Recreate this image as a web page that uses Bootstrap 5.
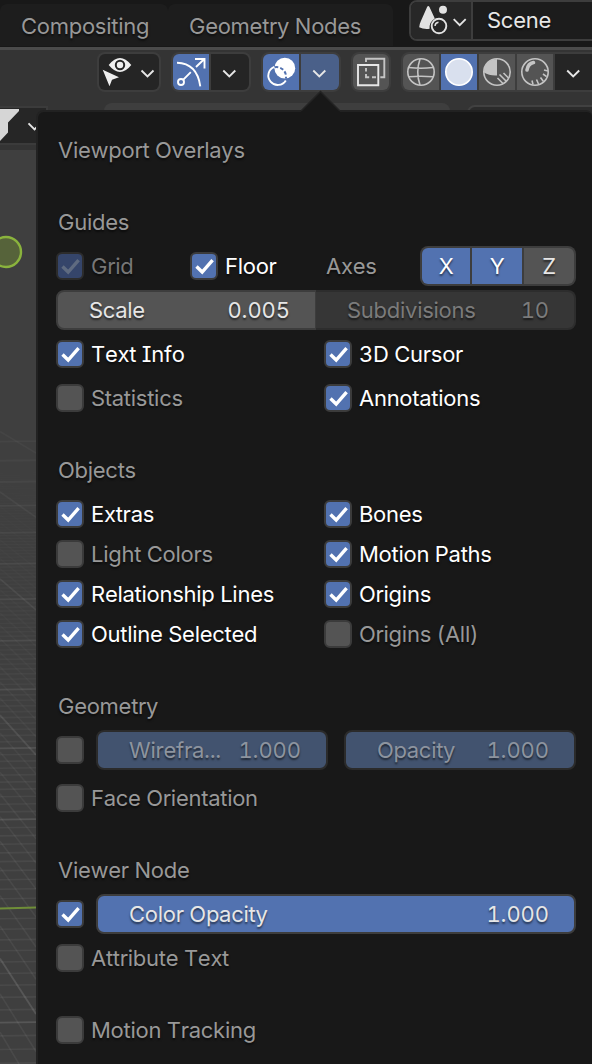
<!DOCTYPE html>
<html lang="en" data-bs-theme="dark">
<head>
<meta charset="utf-8">
<title>Viewport Overlays</title>
<meta name="viewport" content="width=device-width, initial-scale=1">
<link href="https://cdn.jsdelivr.net/npm/bootstrap@5.3.0/dist/css/bootstrap.min.css" rel="stylesheet">
<style>
:root{--blue:#5272b0;--edge:#3d3d3d;--muted:#989898}
body{margin:0;width:592px;height:1064px;overflow:hidden;background:#3f3f3f;color:var(--muted);
  font:400 22px/40px Inter,"Noto Sans",sans-serif;font-kerning:none;font-feature-settings:"tnum","cv08";letter-spacing:-.27px;text-shadow:0 2px 2px rgba(0,0,0,.55)}
svg{display:block;flex:none}
.topbar{height:47px;background:#181818}
.topbar>*,.head3d>*,.settings>*{flex-shrink:0}
.ws-tab{height:42px;margin-top:4px;background:#1d1d1d;border-radius:7px 7px 0 0;line-height:45px;white-space:nowrap}
.scene-box{height:41px;width:200px;border:2px solid var(--edge);border-radius:8px;background:#1c1c1c;overflow:hidden;line-height:37px;color:#e6e6e6}
.scene-pick{width:62px;border-right:2px solid var(--edge);background:#272727}
.head3d{height:56px;border-top:3px solid #4b4b4b;background:#343434;padding:2px 0 0 97px}
.tool-group{height:40px;padding:2px;gap:2px;background:var(--edge);border-radius:8px;overflow:hidden}
.tool-group>*{height:36px;background:#545454}
.tool-group>:first-child{border-radius:6px 0 0 6px}
.tool-group>:last-child{border-radius:0 6px 6px 0}
.tool-group>:only-child{border-radius:6px}
.tool-group>.dk{background:#252525}
.tool-group>.on{background:var(--blue)}
.tool-group>.open{background:#4a6089}
.settings{height:47px;background:#343434}
.filter-box{width:48px;height:39px;margin-top:3px;background:#262626;border:solid #3b3b3b;border-width:2px 2px 2px 0}
.tool-strip{width:346px;height:40px;background:#3e3e3e;border-radius:8px}
.tool-strip2{width:140px;height:40px;border:2px solid #414141;border-radius:8px;background:#2b2b2b}
.overlays{left:36px;top:110px;width:556px;height:970px;background:#181818;border:2px solid #222;border-right-width:0;border-radius:8px 6px 0 0;padding:18px 16px 0 18px}
.arrow{left:300px;top:90px}
.line-row{height:40px;display:flex;align-items:center}
.sep{height:32px}
.halves{display:grid;grid-template-columns:252px 252px;column-gap:16px}
.opt{display:flex;align-items:center;height:40px;margin:0;white-space:nowrap}
.opt .form-check-input,.bare{width:28px;height:28px;margin:0 7px 0 0;flex:none;border:2px solid #3b3b3b;border-radius:6px;background-color:#545454;background-size:24px 24px}
.form-check-input:checked{background-color:var(--blue)!important;border-color:#3b3b3b;
 background-image:url("data:image/svg+xml,%3Csvg xmlns='http://www.w3.org/2000/svg' viewBox='0 0 24 24'%3E%3Cpath d='M4.500 12.500l5.700 5.500L20.600 6.200' fill='none' stroke='%23fff' stroke-width='3.400'/%3E%3C/svg%3E")!important}
.form-check-input:disabled{background-color:#35456a!important;border-color:#2c2c2c;opacity:1!important;
 background-image:url("data:image/svg+xml,%3Csvg xmlns='http://www.w3.org/2000/svg' viewBox='0 0 24 24'%3E%3Cpath d='M4.500 12.500l5.700 5.500L20.600 6.200' fill='none' stroke='%235f6b80' stroke-width='3.400'/%3E%3C/svg%3E")!important}
.opt.lit{color:#fff}
.num{height:40px;border:2px solid var(--edge);border-radius:8px;background:#545454;color:#e6e6e6;padding:0 25px 0 31px;line-height:37px;display:flex;justify-content:space-between}
.num>:last-child{letter-spacing:-.08px}
.num.fill{background:var(--blue)}
.num.dim{background:#42536f;border-color:#2b2b2b;color:#8d949f}
.axes{width:156px;height:40px;padding:2px;gap:2px;background:var(--edge);border-radius:8px;line-height:37px;text-align:center;color:#fff}
.axes>*{background:var(--blue)}
</style>
</head>
<body class="position-relative">
<header class="topbar d-flex">
  <div class="ws-tab" style="width:168px;padding-left:21px">Compositing</div>
  <div class="ws-tab" style="width:225px;padding-left:21px">Geometry Nodes</div>
  <div class="scene-box d-flex ms-3">
    <div class="scene-pick"><svg width="60" height="37" viewBox="411 2 60 37"><path d="M427 7.2q1.2-2.2 2.6 0l5.2 11.4a11 11 0 0 0-5.2 10.2q-6 .8-10.4-1.6.2-3 1.6-6z" fill="#e2e2e2"/><circle cx="443" cy="9.8" r="4" fill="#e2e2e2"/><circle cx="439" cy="26" r="7.3" fill="none" stroke="#e2e2e2" stroke-width="1.9"/><path d="M435 26a4 4 0 0 1 3.5-3.7" fill="none" stroke="#e2e2e2" stroke-width="1.4"/><path d="M453.7 19.2l6 6 6-6" fill="none" stroke="#e2e2e2" stroke-width="1.9"/></svg></div>
    <div style="padding-left:14px">Scene</div>
  </div>
</header>

<div class="head3d d-flex">
  <div class="tool-group d-flex" style="width:64px"><div class="dk flex-fill"><svg width="60" height="36" viewBox="99 54 60 36"><path d="M108.7 65q11.3-14 22.6 0-11.3 14-22.6 0z" fill="#eee"/><circle cx="120" cy="65" r="4.2" fill="#eee" stroke="#252525" stroke-width="2"/><path d="M102.7 69.7l16.3 7.6-7 2.4-2.5 6.6z" fill="#eee"/><path d="M141.5 70.5l6 6 6-6" fill="none" stroke="#e6e6e6" stroke-width="1.9"/></svg></div></div>
  <div class="tool-group d-flex" style="width:80px;margin-left:10px">
    <div class="on"><svg width="36" height="36" viewBox="173 54 36 36" fill="none" stroke="#fff" stroke-width="1.9"><path d="M177 62.8q20 .5 23.3 23.5M183.3 79.7l7.5-7.5M196 67l8.3-8M195 59h9.5v9.5"/><circle cx="181" cy="82" r="3"/></svg></div>
    <div class="dk flex-fill"><svg width="38" height="36" viewBox="211 54 38 36"><path d="M223.3 70.5l6 6 6-6" fill="none" stroke="#e6e6e6" stroke-width="1.9"/></svg></div>
  </div>
  <div class="tool-group d-flex" style="width:80px;margin-left:10px">
    <div class="on"><svg width="36" height="36" viewBox="263 54 36 36"><path d="M274.3 66.8a9.4 9.4 0 1 0 11.5 13.6" fill="none" stroke="#fff" stroke-width="1.9"/><circle cx="284.8" cy="68.2" r="10.4" fill="#fff"/><path d="M274.8 67.3a9.4 9.4 0 0 1 11 11.3" fill="none" stroke="#5272b0" stroke-width="2" stroke-dasharray="3.5 2"/></svg></div>
    <div class="open flex-fill"><svg width="38" height="36" viewBox="301 54 38 36"><path d="M313.3 70.5l6 6 6-6" fill="none" stroke="#e6e6e6" stroke-width="1.9"/></svg></div>
  </div>
  <div class="tool-group d-flex" style="width:40px;margin-left:10px"><div><svg width="36" height="36" viewBox="353 54 36 36" fill="none" stroke-width="1.9"><path d="M366 62v-3.3h18.3v18.5h-4M366 68v3.5M366 74v3.2h3.2M372 77.2h4" stroke="#c4c4c4"/><path d="M358 65h20.3v20.2H358z" stroke="#e6e6e6"/></svg></div></div>
  <div class="tool-group d-flex" style="width:210px;margin-left:10px">
    <div><svg width="36" height="36" viewBox="403 54 36 36" fill="none" stroke="#c4c4c4" stroke-width="1.6"><circle cx="421" cy="72" r="13.2"/><path d="M409 67.5q12 1.5 24 0M409 76.8q12-1 24 0M420 59q-4.5 13 0 26"/></svg></div>
    <div class="on"><svg width="36" height="36" viewBox="441 54 36 36"><circle cx="459" cy="72" r="13.2" fill="#d9e0ee" stroke="#fff" stroke-width="1.6"/></svg></div>
    <div><svg width="36" height="36" viewBox="479 54 36 36" fill="none" stroke="#c4c4c4" stroke-width="1.6"><circle cx="497" cy="72" r="13.2"/><path d="M497 59v16.500q-7.500.500-13-3Q484 60 497 59z" fill="#c4c4c4" stroke="none"/><path d="M497.500 78l5.700 5.700M499.500 74.500l7 7M503.500 73l5 5"/></svg></div>
    <div><svg width="36" height="36" viewBox="517 54 36 36" fill="none" stroke="#c4c4c4" stroke-width="1.6"><circle cx="535" cy="72" r="13.2"/><path d="M527 70q1-6.500 6.500-7.500" stroke-width="3.6" stroke-linecap="round"/><path d="M532 80.500l1 4M536.500 79.500l2 4.500M540.500 77.500l2.800 3.800M543 74l3.600 2.600M544 70l4 1"/></svg></div>
    <div class="dk flex-fill"><svg width="37" height="36" viewBox="555 54 37 36"><path d="M567.2 70.500l6 6 6-6" fill="none" stroke="#e6e6e6" stroke-width="1.9"/></svg></div>
  </div>
</div>

<div class="settings d-flex overflow-hidden">
  <div class="filter-box"><svg width="46" height="35" viewBox="0 108 46 35"><path d="M0 109h19v2L8 122.500v10L0 141z" fill="#d6d6d6"/><path d="M28.500 123.300l6 6 6-6" fill="none" stroke="#e6e6e6" stroke-width="1.9"/></svg></div>
  <div class="tool-strip" style="margin-left:56px"></div>
  <div class="tool-strip2" style="margin:2px 0 0 17px"></div>
</div>

<svg id="scene3d" width="36" height="914" viewBox="0 150 36 914">
  <g id="gridLines" stroke="#fff"></g>
  <path d="M0 908.500l36-1" stroke="#6f8e38" stroke-width="2.200"/>
  <circle cx="6" cy="252" r="15" fill="#56633a" stroke="#8ab33d" stroke-width="2.400"/>
</svg>

<section class="overlays position-absolute">
  <div class="line-row ps-1"><span style="margin-left:-2px">Viewport Overlays</span></div>
  <div class="sep"></div>
  <div class="line-row ps-1"><span style="margin-left:-2px">Guides</span></div>
  <div style="height:4px"></div>
  <div class="line-row">
    <label class="opt" style="width:134px;color:#777"><input class="form-check-input" type="checkbox" checked disabled>Grid</label>
    <label class="opt lit" style="width:136px"><input class="form-check-input" type="checkbox" checked>Floor</label>
    <span>Axes</span>
    <div class="axes d-flex ms-auto"><span style="width:48px;border-radius:6px 0 0 6px">X</span><span style="width:50px">Y</span><span style="width:50px;border-radius:0 6px 6px 0;background:#545454;color:#e6e6e6">Z</span></div>
  </div>
  <div style="height:4px"></div>
  <div class="d-flex">
    <div class="num" style="width:260px;border-radius:8px 0 0 8px;border-right-width:1px">
      <span>Scale</span><span>0.005</span></div>
    <div class="num" style="width:260px;border-radius:0 8px 8px 0;border-left:0;background:#363636;border-color:#2d2d2d;color:#7b7b7b"><span>Subdivisions</span><span>10</span></div>
  </div>
  <div class="halves" style="row-gap:4px;padding-top:4px">
    <label class="opt lit"><input class="form-check-input" type="checkbox" checked>Text Info</label>
    <label class="opt lit"><input class="form-check-input" type="checkbox" checked>3D Cursor</label>
    <label class="opt"><input class="form-check-input" type="checkbox">Statistics</label>
    <label class="opt lit"><input class="form-check-input" type="checkbox" checked>Annotations</label>
  </div>
  <div class="sep"></div>
  <div class="line-row ps-1"><span style="margin-left:-2px">Objects</span></div>
  <div class="halves" style="padding-top:4px">
    <label class="opt lit"><input class="form-check-input" type="checkbox" checked>Extras</label>
    <label class="opt lit"><input class="form-check-input" type="checkbox" checked>Bones</label>
    <label class="opt"><input class="form-check-input" type="checkbox">Light Colors</label>
    <label class="opt lit"><input class="form-check-input" type="checkbox" checked>Motion Paths</label>
    <label class="opt lit"><input class="form-check-input" type="checkbox" checked>Relationship Lines</label>
    <label class="opt lit"><input class="form-check-input" type="checkbox" checked>Origins</label>
    <label class="opt lit"><input class="form-check-input" type="checkbox" checked>Outline Selected</label>
    <label class="opt"><input class="form-check-input" type="checkbox">Origins (All)</label>
  </div>
  <div class="sep"></div>
  <div class="line-row ps-1"><span style="margin-left:-2px">Geometry</span></div>
  <div class="line-row" style="margin-top:4px">
    <input class="form-check-input bare" type="checkbox" style="margin-right:12px">
    <div class="num dim" style="width:232px"><span>Wirefra...</span><span>1.000</span></div>
    <div class="num dim ms-3" style="width:232px"><span>Opacity</span><span>1.000</span></div>
  </div>
  <label class="opt" style="margin-top:8px"><input class="form-check-input" type="checkbox">Face Orientation</label>
  <div class="sep"></div>
  <div class="line-row ps-1"><span style="margin-left:-2px">Viewer Node</span></div>
  <div class="line-row" style="margin-top:4px">
    <input class="form-check-input bare" type="checkbox" style="margin-right:12px" checked>
    <div class="num fill flex-fill"><span>Color Opacity</span><span>1.000</span></div>
  </div>
  <label class="opt" style="margin-top:4px"><input class="form-check-input" type="checkbox">Attribute Text</label>
  <div class="sep"></div>
  <label class="opt"><input class="form-check-input" type="checkbox">Motion Tracking</label>
</section>
<svg class="arrow position-absolute" width="40" height="23" viewBox="300 90 40 23"><path d="M301 111l19.500-19.500L340 111v2h-39z" fill="#181818"/><path d="M301 111l19.500-19.500L340 111" fill="none" stroke="#242424" stroke-width="1.500"/></svg>

<script src="https://cdn.jsdelivr.net/npm/bootstrap@5.3.0/dist/js/bootstrap.bundle.min.js"></script>
<script>
// Perspective floor grid: every tenth line is a major one.
const g = document.getElementById('gridLines');
function gridLine(y1, y2, major) {
  const near = Math.max(0, Math.min(1, (y1 - 430) / 420));
  const l = document.createElementNS('http://www.w3.org/2000/svg', 'line');
  l.setAttribute('x1', 0); l.setAttribute('y1', y1);
  l.setAttribute('x2', 36); l.setAttribute('y2', y2);
  l.setAttribute('stroke-width', major ? 1.8 : 1.6);
  l.setAttribute('stroke-opacity', (major ? .03 + .09 * near : .055 * near).toFixed(3));
  g.appendChild(l);
}
for (let i = -14; i <= 110; i++) {
  const y = 97 + 6591 / (8.12 + i / 10);
  if (i !== 0) gridLine(y, y - .5, i % 10 === 0);
}
for (let i = -10; i <= 40; i++) {
  const s = 1 / (.650 + .0256 * i);
  gridLine(97 + 560 * s, 97 + 596 * s, i % 10 === 0);
}
</script>
</body>
</html>
